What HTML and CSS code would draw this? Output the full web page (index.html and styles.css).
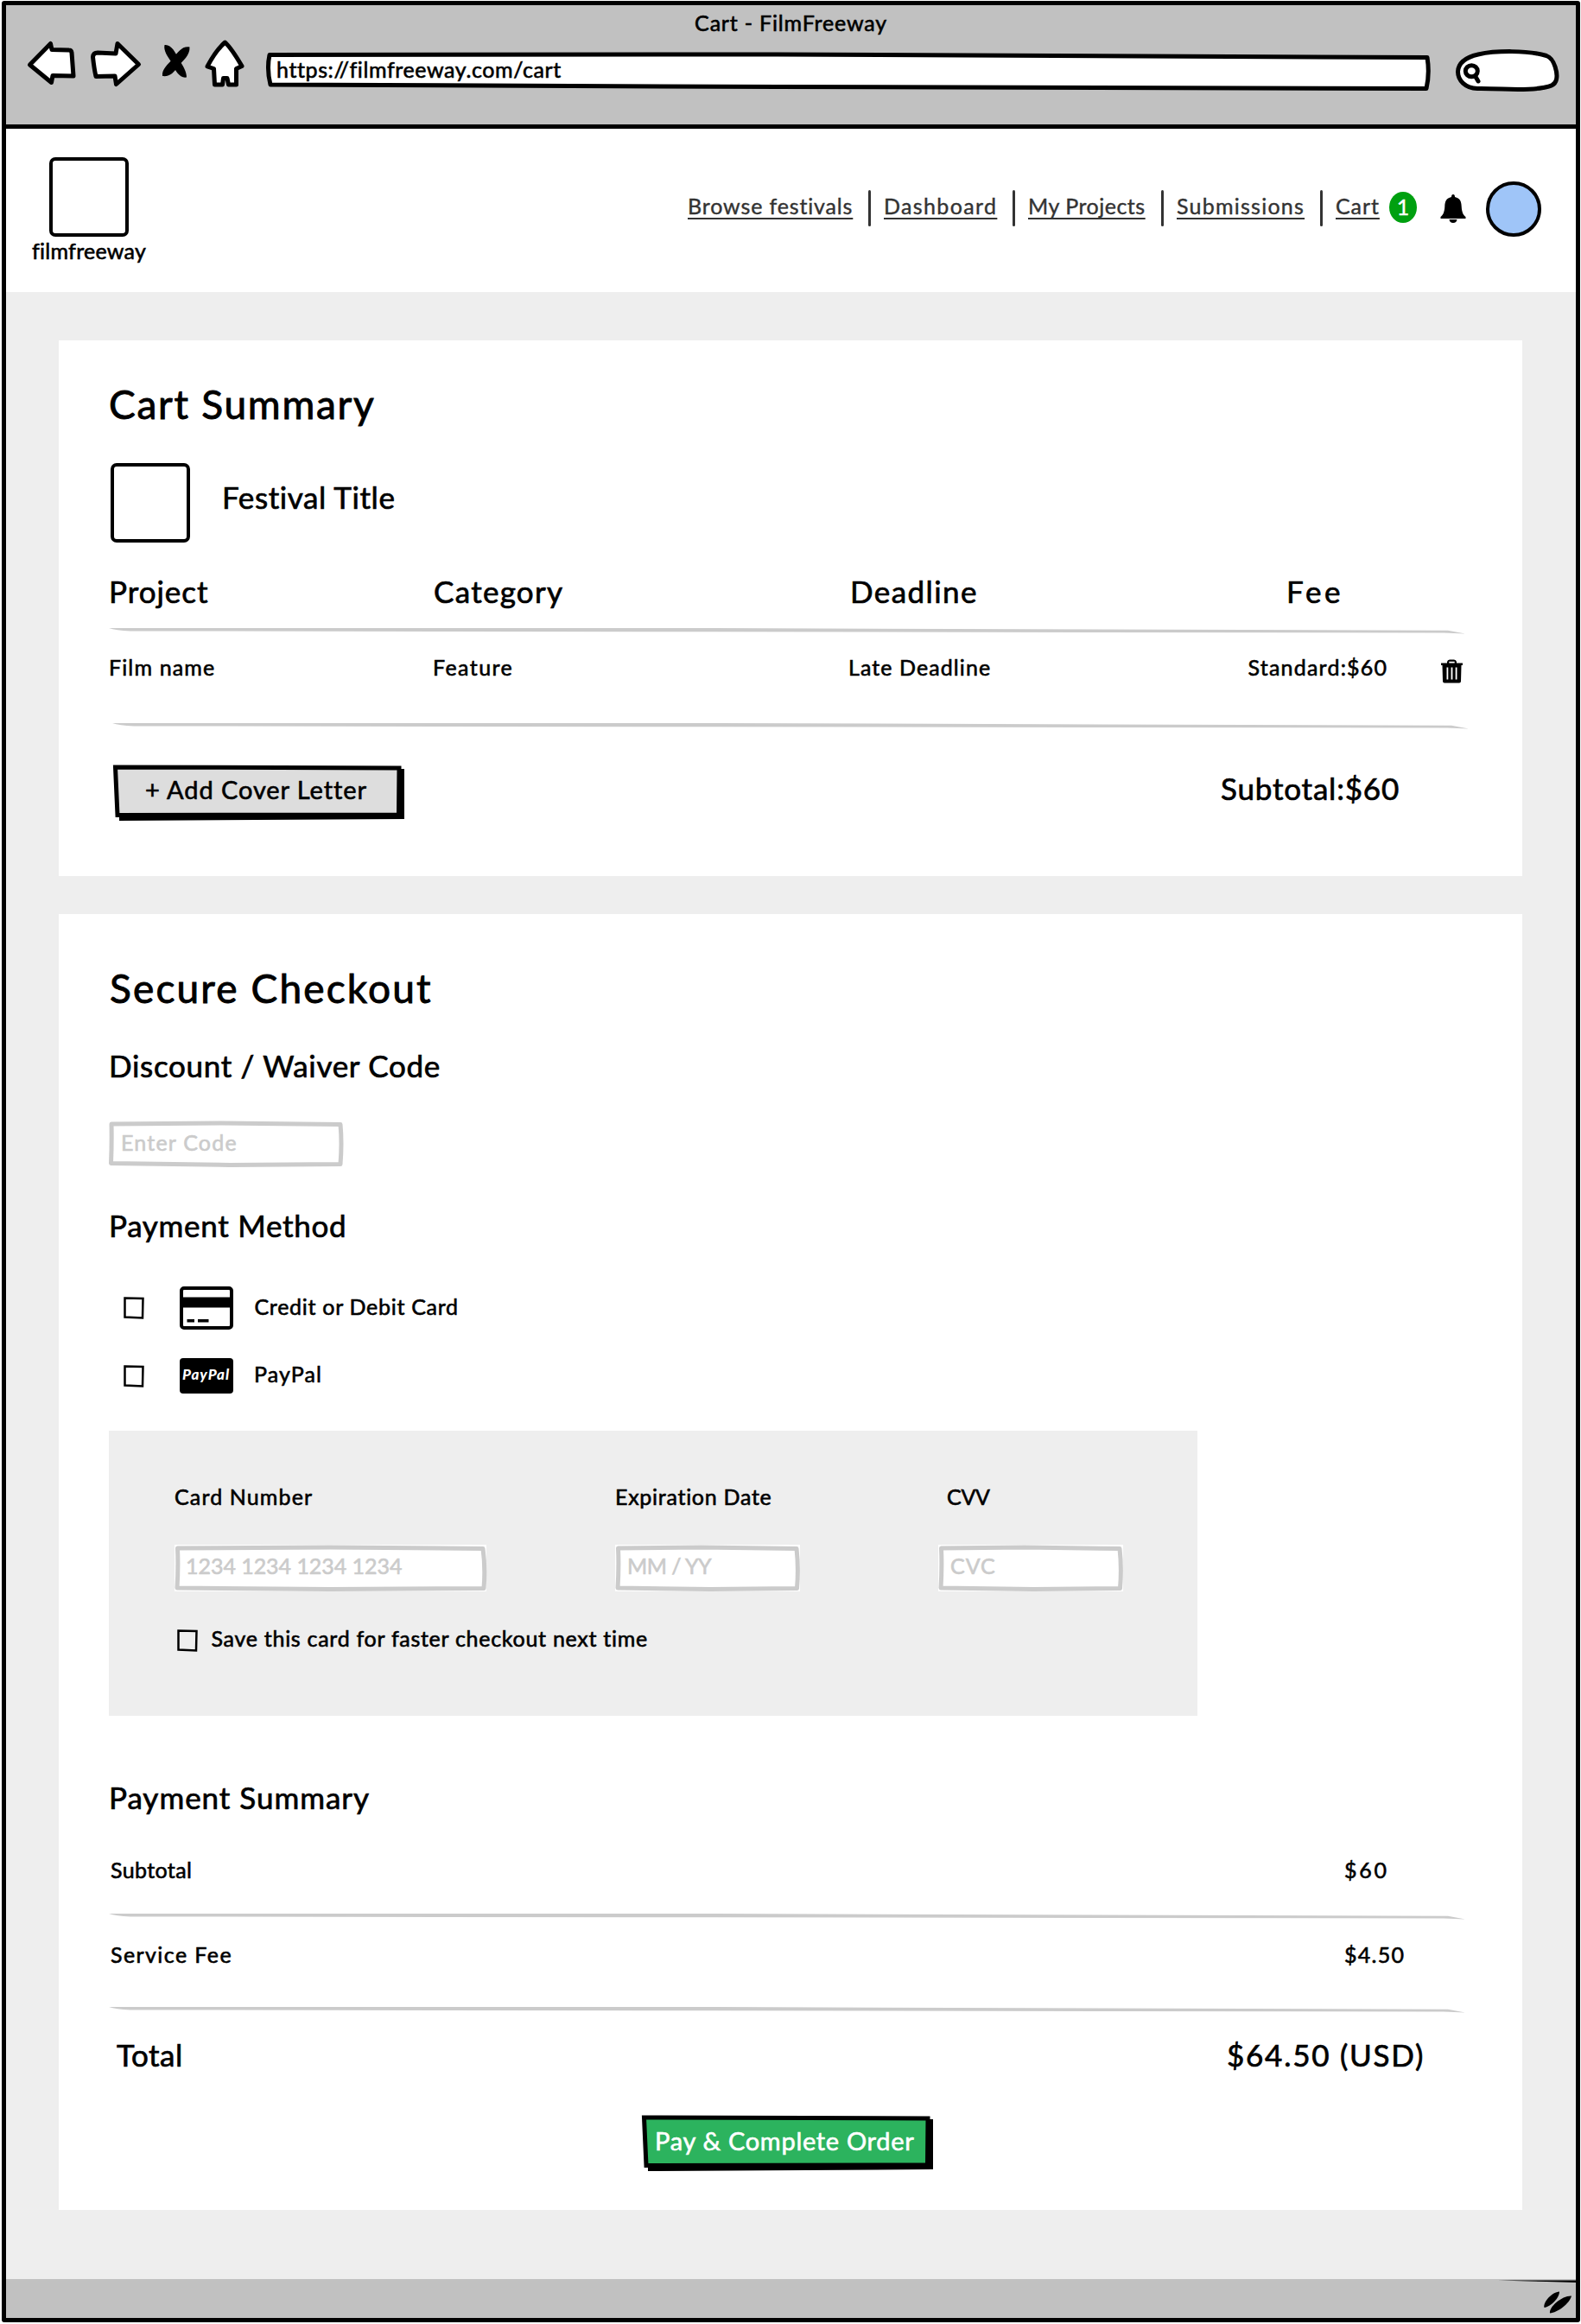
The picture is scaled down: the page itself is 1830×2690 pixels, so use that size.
FILE: index.html
```html
<!DOCTYPE html>
<html lang="en">
<head>
<meta charset="utf-8">
<title>Cart - FilmFreeway</title>
<link rel="stylesheet" href="styles.css">
</head>
<body>
<div class="window">
  <header class="chrome">
    <div class="chrome-title"><span class="t t-title">Cart - FilmFreeway</span></div>
    <div class="toolbar">
      <svg class="tool back" viewBox="30 46 60 60"><path class="ink" d="M34.500 75 58.500 50.500 60 57.500 80 58Q82.500 58 83 61L85 88 61 87.500 59.500 95.500Z"/></svg>
      <svg class="tool forward" viewBox="100 46 66 60"><path class="ink" d="M107.500 66Q108 61 113 61L134 62 136 50.500 160.500 74.500 134.500 97.500 133 88 111 88.500Q109 80 107.500 66Z"/></svg>
      <svg class="tool stop" viewBox="184 46 40 60"><path d="M190.500 52C198 51 203 60 207 69 212 76 216 83 216 89.500 208 91 203 82 199 73 194 65 189 59 190.500 52ZM219.500 54.500C220 64 212 70 206 77 201 84 197 89 188 88 187 80 195 74 200 68 206 60 211 53 219.500 54.500Z"/></svg>
      <svg class="tool home" viewBox="234 46 52 60"><path class="ink" d="M260.500 49Q268 56 280 76.500L273.500 79.500 273.500 98 264.500 98 263 90.500 258.500 90.500 257.500 98 248.500 98 247.500 79.500 240 77Q250 58 260.500 49Z"/></svg>
      <div class="address">
        <svg class="shape" viewBox="306 46 1352 60"><path class="ink" d="M312 63.500 900 63 1652 66.500Q1655 85 1651 102.500L900 100.500 313 98Q308.500 80 312 63.500Z"/></svg>
        <span class="t t-url">https://filmfreeway.com/cart</span>
      </div>
      <svg class="tool search" viewBox="1682 46 126 60"><path class="ink" d="M1710 102.500C1696 102 1687.500 93 1687.500 83 1688 72 1698 66 1711 63 1731 58.500 1768 58 1790 64.500 1800 68 1803 86 1801.500 92 1800 99 1794 100 1786 101.500 1762 106 1738 102 1710 102.500Z"/><ellipse class="ink" cx="1703.300" cy="82.300" rx="7" ry="6.500"/><path class="ink" d="M1707.500 88 1711 94"/></svg>
    </div>
  </header>

  <nav class="site-nav">
    <div class="brand">
      <div class="thumb"></div>
      <span class="t t-brand">filmfreeway</span>
    </div>
    <div class="links">
      <a class="t t-n1">Browse festivals</a><i class="sep"></i>
      <a class="t t-n2">Dashboard</a><i class="sep"></i>
      <a class="t t-n3">My Projects</a><i class="sep"></i>
      <a class="t t-n4">Submissions</a><i class="sep"></i>
      <a class="t t-n5">Cart</a>
      <span class="badge">1</span>
      <svg class="bell" viewBox="0 0 30 34"><path d="M15 0Q17 0 17 3C23 4.500 24.500 8 24.700 14 25 21 27 24 29.500 26V28H.500V26C3 24 5 21 5.300 14 5.500 8 7 4.500 13 3Q13 0 15 0ZM10.500 29H19.500Q19 33 15 33T10.500 29Z"/></svg>
      <span class="avatar"></span>
    </div>
  </nav>

  <main>
    <section class="card cart">
      <h1 class="t t-cart">Cart Summary</h1>
      <div class="festival">
        <div class="thumb"></div>
        <h2 class="t t-fest">Festival Title</h2>
      </div>
      <div class="row head">
        <span class="t t-h1">Project</span>
        <span class="t t-h2">Category</span>
        <span class="t t-h3">Deadline</span>
        <span class="t t-h4">Fee</span>
      </div>
      <svg class="rule" viewBox="0 0 1570 8"><path d="M0 1H700L1550 3.800 1570 7.500 1545 6.500 700 5.300 25 4.500Q8 3.500 0 1Z"/></svg>
      <div class="row item">
        <span class="t t-c1">Film name</span>
        <span class="t t-c2">Feature</span>
        <span class="t t-c3">Late Deadline</span>
        <span class="t t-c4">Standard:$60</span>
        <svg class="trash" viewBox="0 0 25 28"><path fill-rule="evenodd" d="M7 4.500V3Q7.500 .500 10 .500H15Q17.500 .500 18 3V4.500H25V7H0V4.500ZM9.300 4.500H15.700V2.700H9.300Z"/><path fill-rule="evenodd" d="M1.500 7H23.500L23 25.500Q23 27.500 21 27.500H4Q2 27.500 2 25.500ZM6.500 9.500V23.500H8.300V9.500ZM11.600 9.500V23.500H13.400V9.500ZM16.700 9.500V23.500H18.500V9.500Z"/></svg>
      </div>
      <svg class="rule rule-b" viewBox="0 0 1570 8"><path d="M0 1H700L1550 3.800 1570 7.500 1545 6.500 700 5.300 25 4.500Q8 3.500 0 1Z"/></svg>
      <div class="cart-foot">
        <button class="btn">
          <svg class="shape" viewBox="0 0 337 65"><path d="M7 8 337 5V63L7 65Z"/><path class="face" d="M2.500 3 331 4 330.500 58 5 58.500Z"/></svg>
          <span class="t t-add">+ Add Cover Letter</span>
        </button>
        <span class="t t-sub">Subtotal:$60</span>
      </div>
    </section>

    <section class="card checkout">
      <h1 class="t t-sec">Secure Checkout</h1>
      <h2 class="t t-disc">Discount / Waiver Code</h2>
      <div class="field code">
        <svg class="shape" viewBox="0 0 272 54"><path d="M3 4 130 3 268 4.500Q270 26 268 50.500L140 51.500 2.500 49.500Q3.500 26 3 4Z"/></svg>
        <span class="t t-p1">Enter Code</span>
      </div>
      <h2 class="t t-pm">Payment Method</h2>
      <div class="option">
        <svg class="check" viewBox="0 0 24 26"><path d="M1.500 1.500 22.500 2 22 24.500 1.500 23.500Z"/></svg>
        <svg class="pay card-icon" viewBox="0 0 62 50"><rect x="2" y="2" width="58" height="46" rx="3"/><path d="M2 12.500H60V24.500H2ZM8.500 38H17V41.500H8.500ZM21 38H33.500V41.500H21Z"/></svg>
        <span class="t t-o1">Credit or Debit Card</span>
      </div>
      <div class="option paypal">
        <svg class="check" viewBox="0 0 24 26"><path d="M1.500 1.500 22.500 2 22 24.500 1.500 23.500Z"/></svg>
        <span class="pay paypal-logo"><span class="t t-logo">PayPal</span></span>
        <span class="t t-o2">PayPal</span>
      </div>
      <div class="panel">
        <div class="panel-row">
          <span class="t t-l1">Card Number</span>
          <span class="t t-l2">Expiration Date</span>
          <span class="t t-l3">CVV</span>
        </div>
        <div class="panel-row inputs">
          <div class="field number"><svg class="shape" viewBox="0 0 361 54"><path d="M3.500 4 180 3 357 4.500Q360 27 358 50.500L180 51.500 3 50Q4.500 26 3.500 4Z"/></svg><span class="t t-p2">1234 1234 1234 1234</span></div>
          <div class="field"><svg class="shape" viewBox="0 0 214 54"><path d="M3.500 4 100 3 210 4.500Q212.500 27 210.500 50.500L110 51.500 3 50Q4.500 26 3.500 4Z"/></svg><span class="t t-p3">MM / YY</span></div>
          <div class="field"><svg class="shape" viewBox="0 0 214 54"><path d="M3.500 4 100 3 210 4.500Q212.500 27 210.500 50.500L110 51.500 3 50Q4.500 26 3.500 4Z"/></svg><span class="t t-p4">CVC</span></div>
        </div>
        <div class="save">
          <svg class="check" viewBox="0 0 24 26"><path d="M1.500 1.500 22.500 2 22 24.500 1.500 23.500Z"/></svg>
          <span class="t t-save">Save this card for faster checkout next time</span>
        </div>
      </div>
      <h2 class="t t-ps">Payment Summary</h2>
      <div class="line first"><span class="t t-s1">Subtotal</span><span class="t t-s2">$60</span></div>
      <svg class="rule" viewBox="0 0 1570 8"><path d="M0 1H700L1550 3.800 1570 7.500 1545 6.500 700 5.300 25 4.500Q8 3.500 0 1Z"/></svg>
      <div class="line second"><span class="t t-s3">Service Fee</span><span class="t t-s4">$4.50</span></div>
      <svg class="rule" viewBox="0 0 1570 8"><path d="M0 1H700L1550 3.800 1570 7.500 1545 6.500 700 5.300 25 4.500Q8 3.500 0 1Z"/></svg>
      <div class="line total"><span class="t t-t1">Total</span><span class="t t-t2">$64.50 (USD)</span></div>
      <button class="btn primary">
        <svg class="shape" viewBox="0 0 337 65"><path d="M7 8 337 5V63L7 65Z"/><path class="face" d="M2.500 3 331 4 330.500 58 5 58.500Z"/></svg>
        <span class="t t-pay">Pay &amp; Complete Order</span>
      </button>
    </section>
  </main>

  <footer class="status">
    <svg class="grip" viewBox="1730 2636 94 48"><path d="M1734 2639.500 1824 2639.500V2642L1790 2641Z"/><path d="M1787.500 2671C1786 2664 1797 2653 1805 2652.500 1805 2660 1795 2670 1787.500 2671ZM1794 2677.500C1793 2670 1808 2657 1819 2657.500 1817 2666 1803 2677 1794 2677.500Z"/></svg>
  </footer>
</div>
</body>
</html>
```
FILE: styles.css
```css
* { box-sizing: border-box; }

body {
  margin: 0;
  background: #fff;
  color: #000;
  font: 25px/30px Lato, "Open Sans", sans-serif;
  font-weight: 400;
  -webkit-text-stroke: 0.6px currentColor;
}

h1, h2 { margin: 0; font-weight: 400; }
h1 { font-size: 46px; line-height: 56px; -webkit-text-stroke-width: 0.9px; }
h2 { font-size: 35px; line-height: 42px; -webkit-text-stroke-width: 0.7px; }

.t { display: block; white-space: pre; width: max-content; }
svg { display: block; overflow: visible; flex: none; }

.window {
  width: 1827px;
  height: 2687px;
  margin: 1px 0 0 2px;
  border: 5px solid #000;
  border-radius: 3px;
}

/* browser chrome */
.chrome {
  height: 143px;
  padding-top: 5px;
  background: #c1c1c1;
  border-bottom: 5px solid #000;
}
.chrome-title { display: flex; justify-content: center; }
.toolbar { display: flex; margin-top: 5px; padding-left: 23px; }
.tool { height: 60px; }
.ink { fill: #fff; stroke: #000; stroke-width: 5; stroke-linejoin: round; stroke-linecap: round; }
.back { width: 60px; }
.forward { width: 66px; margin-left: 10px; }
.stop { width: 40px; margin-left: 18px; }
.home { width: 52px; margin-left: 10px; }
.address { position: relative; width: 1352px; height: 60px; margin-left: 20px; padding: 19px 0 0 14px; }
.search { width: 126px; margin-left: 24px; }
.shape { position: absolute; inset: 0; width: 100%; height: 100%; }
.shape + .t { position: relative; }

/* site navigation */
.site-nav { display: flex; height: 189px; padding-left: 30px; }
.brand { width: 132px; padding-top: 33px; }
.thumb { flex: none; width: 92px; height: 92px; border: 4px solid #000; border-radius: 7px; }
.brand .thumb { margin: 0 0 1px 20px; }
.links {
  display: grid;
  grid-template-columns: 209px 18px 149px 18px 154px 18px 166px 18px 62px 59px 53px 64px;
  align-items: center;
  height: 64px;
  margin: 61px 0 0 627px;
  color: #333;
  -webkit-text-stroke-width: 0.4px;
}
.links a {
  margin-bottom: 8px;
  text-decoration: underline 2px;
  text-underline-offset: 4px;
  text-decoration-skip-ink: none;
}
.sep { width: 3px; height: 42px; margin-bottom: 2px; border-radius: 2px; background: #333; }
.badge {
  width: 32px;
  height: 36px;
  margin-bottom: 4px;
  border-radius: 50%;
  background: #00a010;
  color: #fff;
  line-height: 34px;
  text-align: center;
}
.bell { width: 30px; height: 34px; fill: #000; }
.avatar { width: 64px; height: 64px; border: 4px solid #000; border-radius: 50%; background: #9fc5f8; }

/* page */
main { height: 2300px; padding: 56px 62px 0 61px; background: #eee; }
.card { padding: 0 66px 0 58px; background: #fff; }
.rule { width: 1570px; height: 8px; fill: #cbcbcb; }

/* cart summary */
.cart { height: 620px; padding-top: 46px; }
.festival { display: flex; margin: 40px 0 0 2px; }
.festival h2 { margin-top: 18px; }
.row { display: grid; grid-template-columns: 375px 483px 505px 1fr; }
.head { margin: 35px 0 21px; font-size: 35px; line-height: 42px; -webkit-text-stroke-width: 0.7px; }
.item { grid-template-columns: 375px 481px 461px 225px 1fr; height: 30px; margin: 23px 0 49px; }
.trash { width: 25px; height: 28px; margin-top: 6px; }
.rule-b { margin-left: 4px; }
.cart-foot { display: flex; margin-top: 41px; padding-left: 5px; }
.btn {
  position: relative;
  display: flex;
  flex: none;
  width: 337px;
  height: 65px;
  padding: 11px 0 0 37px;
  border: 0;
  background: none;
  color: #000;
  font: 29px/36px Lato, "Open Sans", sans-serif;
  -webkit-text-stroke: 0.6px currentColor;
}
.face { fill: #ddd; stroke: #000; stroke-width: 5; }

/* checkout */
.checkout { height: 1500px; margin-top: 44px; padding-top: 58px; }
.t-disc { margin-top: 40px; }
.field { position: relative; height: 54px; padding: 9px 0 0 14px; color: #cbcbcb; }
.field .shape path { fill: #fff; stroke: #cbcbcb; stroke-width: 5; stroke-linejoin: round; }
.code { width: 272px; margin: 43px 0 46px; padding-top: 10px; }
.option { display: flex; align-items: center; height: 50px; margin-top: 50px; padding-left: 17px; }
.option .t-o1, .option .t-o2 { margin-bottom: 5px; }
.check { width: 24px; height: 26px; fill: none; stroke: #000; stroke-width: 2.5; }
.pay { width: 62px; margin: 0 24px 0 41px; }
.card-icon { height: 50px; }
.card-icon rect { fill: #fff; stroke: #000; stroke-width: 4; }
.paypal { height: 41px; margin-top: 33px; }
.paypal-logo {
  height: 41px;
  padding: 8px 0 0 3px;
  border-radius: 4px;
  background: #000;
  color: #fff;
  font: italic 900 17px/22px Lato, sans-serif;
  -webkit-text-stroke: 0;
}

.panel { width: 1260px; height: 330px; margin: 43px 0 73px; padding: 61px 0 0 75px; background: #eee; }
.panel-row { display: grid; grid-template-columns: 511px 374px 214px; }
.inputs { height: 54px; margin-top: 41px; }
.inputs .field { width: 214px; background: #fff; }
.inputs .number { width: 361px; margin-left: 1px; }
.save { display: flex; align-items: center; margin-top: 39px; padding-left: 4px; }
.save .t { margin: 0 0 6px 15.5px; }

.line { display: grid; grid-template-columns: 1430px 1fr; }
.first { margin: 48px 0 35px; }
.second { margin: 25px 0 45px; }
.total { grid-template-columns: 1294px 1fr; margin: 27px 0 49px; font-size: 35px; line-height: 42px; -webkit-text-stroke-width: 0.7px; }
.primary { margin-left: 617px; padding: 12px 0 0 15px; color: #fff; }
.primary .face { fill: #2cb35e; }

/* status bar */
.status { display: flex; justify-content: flex-end; height: 45px; background: #c1c1c1; }
.grip { width: 94px; height: 48px; margin-top: -2px; }

/* tracking of each label */
.t-title { letter-spacing: 0.82px; }
.t-url { letter-spacing: 0.61px; }
.t-brand { letter-spacing: 0.27px; }
.t-n1 { letter-spacing: 0.86px; }
.t-n2 { letter-spacing: 1.36px; }
.t-n3 { letter-spacing: 0.51px; }
.t-n4 { letter-spacing: 1.24px; }
.t-n5 { letter-spacing: 0.92px; }
.t-cart { letter-spacing: 1.73px; }
.t-fest { margin-left: 37px; letter-spacing: 0.58px; }
.t-h1 { letter-spacing: 0.98px; }
.t-h2 { margin-left: 1px; letter-spacing: 1.29px; }
.t-h3 { letter-spacing: 1.42px; }
.t-h4 { letter-spacing: 3.63px; }
.t-c1 { letter-spacing: 1.14px; }
.t-c2 { letter-spacing: 1.42px; }
.t-c3 { letter-spacing: 1.09px; }
.t-c4 { margin-left: 1.5px; letter-spacing: 1.22px; }
.t-add { letter-spacing: 0.91px; }
.t-sub { margin: 6px 0 0 945px; font-size: 35px; line-height: 42px; letter-spacing: 0.81px; -webkit-text-stroke-width: 0.7px; }
.t-sec { margin-left: 1px; letter-spacing: 2.14px; }
.t-disc { letter-spacing: 0.69px; }
.t-p1 { letter-spacing: 1.21px; }
.t-pm { letter-spacing: 0.71px; }
.t-o1 { margin-left: 0.5px; letter-spacing: 0.71px; }
.t-logo { letter-spacing: 0.97px; }
.t-o2 { letter-spacing: 1.12px; }
.t-l1 { margin-left: 1px; letter-spacing: 1.13px; }
.t-l2 { letter-spacing: 0.73px; }
.t-l3 { margin-left: 10px; letter-spacing: -0.31px; }
.t-p2 { margin-left: -1px; letter-spacing: -0.04px; }
.t-p3 { letter-spacing: -0.52px; }
.t-p4 { letter-spacing: 0.94px; }
.t-save { letter-spacing: 0.72px; }
.t-ps { letter-spacing: 0.97px; }
.t-s1 { margin-left: 2px; letter-spacing: 0.38px; }
.t-s2 { letter-spacing: 2.75px; }
.t-s3 { margin-left: 2px; letter-spacing: 1.42px; }
.t-s4 { letter-spacing: 1.27px; }
.t-t1 { margin-left: 9px; letter-spacing: 0.53px; }
.t-t2 { letter-spacing: 1.75px; }
.t-pay { letter-spacing: 0.7px; }
```
